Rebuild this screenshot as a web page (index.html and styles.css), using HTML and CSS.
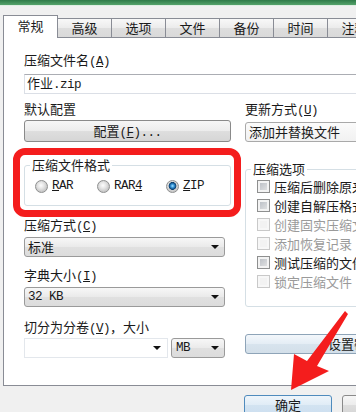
FILE: index.html
```html
<!DOCTYPE html>
<html lang="zh-CN">
<head>
<meta charset="utf-8">
<title>压缩文件名和参数</title>
<link rel="stylesheet" href="styles.css">
</head>
<body>
<div class="titlebar"></div>
<div class="tabs">
  <div class="tab active">常规</div>
  <div class="tab">高级</div>
  <div class="tab">选项</div>
  <div class="tab">文件</div>
  <div class="tab">备份</div>
  <div class="tab">时间</div>
  <div class="tab">注释</div>
</div>
<div class="panel">
  <div class="label">压缩文件名<span class="en">(<u>A</u>)</span></div>
  <div class="input filename">作业<span class="en">.zip</span></div>
  <div class="columns">
    <div class="col left">
      <div class="label">默认配置</div>
      <div class="button profile">配置<span class="en">(<u>F</u>)...</span></div>
      <div class="highlight">
        <fieldset class="group format">
          <legend>压缩文件格式</legend>
          <div class="radios">
            <div class="radio-item"><span class="radio"></span><span class="en"><u>R</u>AR</span></div>
            <div class="radio-item"><span class="radio"></span><span class="en">RAR<u>4</u></span></div>
            <div class="radio-item"><span class="radio checked"></span><span class="en"><u>Z</u>IP</span></div>
          </div>
        </fieldset>
      </div>
      <div class="label gap-a">压缩方式<span class="en">(<u>C</u>)</span></div>
      <div class="combo small"><span class="combo-text">标准</span><span class="arrow"></span></div>
      <div class="label gap-b">字典大小<span class="en">(<u>I</u>)</span></div>
      <div class="combo small"><span class="combo-text en">32 KB</span><span class="arrow"></span></div>
      <div class="label gap-c">切分为分卷<span class="en">(<u>V</u>)</span>，大小</div>
      <div class="split-row">
        <div class="combo edit"><span class="combo-text"></span><span class="arrow"></span></div>
        <div class="combo unit"><span class="combo-text en">MB</span><span class="arrow"></span></div>
      </div>
    </div>
    <div class="col right">
      <div class="label">更新方式<span class="en">(<u>U</u>)</span></div>
      <div class="combo update"><span class="combo-text">添加并替换文件</span><span class="arrow"></span></div>
      <fieldset class="group options">
        <legend>压缩选项</legend>
        <div class="checks">
          <div class="check-item"><span class="check"></span>压缩后删除原来的文件</div>
          <div class="check-item"><span class="check"></span>创建自解压格式压缩文件</div>
          <div class="check-item disabled"><span class="check"></span>创建固实压缩文件</div>
          <div class="check-item disabled"><span class="check"></span>添加恢复记录</div>
          <div class="check-item"><span class="check"></span>测试压缩的文件</div>
          <div class="check-item disabled"><span class="check"></span>锁定压缩文件</div>
        </div>
      </fieldset>
      <div class="button blue password">设置密码<span class="en">(<u>P</u>)...</span></div>
    </div>
  </div>
</div>
<div class="actions">
  <div class="button default">确定</div>
  <div class="button">取消</div>
</div>
<svg class="pointer" width="356" height="412" viewBox="0 0 356 412" aria-hidden="true">
  <polygon points="291,390 294,354 307,361 345,311 348,314 317,366 329,371" fill="#f41d1d"/>
</svg>
</body>
</html>
```

FILE: styles.css
```css
html, body {
  margin: 0;
  padding: 0;
}
body {
  position: relative;
  width: 356px;
  height: 412px;
  overflow: hidden;
  background: #f0f0f0;
  font-family: "Noto Sans CJK SC", sans-serif;
  font-size: 13px;
  line-height: 16px;
  color: #1a1a1a;
}
.en {
  font-family: "Liberation Mono", "Noto Sans CJK SC", monospace;
  font-size: 12.6px;
  letter-spacing: -0.55px;
}
u {
  text-decoration: underline;
  text-underline-offset: 1px;
}
.titlebar {
  height: 5px;
  background: linear-gradient(#2f7a48, #55a36b);
  border-bottom: 1px solid #dfeee3;
}
.tabs {
  display: flex;
  align-items: flex-end;
  height: 22px;
  margin-top: 9px;
  margin-left: 3px;
}
.tab {
  box-sizing: border-box;
  width: 55px;
  height: 19px;
  margin-left: -1px;
  padding-top: 1px;
  text-align: center;
  border: 1px solid #898c95;
  border-bottom: none;
  background: linear-gradient(#f8f8f8, #ebebeb 50%, #dedede 51%, #d9d9d9);
  flex-shrink: 0;
}
.tab:first-child {
  margin-left: 0;
}
.tab.active {
  position: relative;
  z-index: 1;
  height: 23px;
  margin-bottom: -1px;
  padding-top: 2px;
  background: #fff;
}
.panel {
  box-sizing: border-box;
  width: 520px;
  margin-left: 3px;
  padding: 14px 0 27px 20px;
  background: #fff;
  border: 1px solid #898c95;
}
.input {
  box-sizing: border-box;
  height: 20px;
  padding-left: 2px;
  background: #fff;
  border: 1px solid #dbdfe6;
  border-top-color: #abadb3;
}
.filename {
  width: 426px;
  margin-top: 4px;
}
.columns {
  display: flex;
  gap: 14px;
  margin-top: 7px;
}
.col.left {
  width: 207px;
}
.col.right {
  width: 230px;
}
.button {
  box-sizing: border-box;
  height: 20px;
  text-align: center;
  border: 1px solid #8a8a8a;
  border-radius: 3px;
  background: linear-gradient(#f6f6f6, #ececec 50%, #dedede 51%, #d6d6d6);
}
.button.profile {
  height: 22px;
  line-height: 20px;
  margin-top: 3px;
}
.combo {
  box-sizing: border-box;
  display: flex;
  align-items: center;
  height: 20px;
  padding: 0 5px 0 3px;
  border: 1px solid #9a9a9a;
  border-radius: 3px;
  background: linear-gradient(#f7f7f7, #eaeaea 50%, #e0e0e0 51%, #dcdcdc);
}
.combo-text {
  flex: 1;
  white-space: nowrap;
}
.arrow {
  width: 0;
  height: 0;
  border-left: 4px solid transparent;
  border-right: 4px solid transparent;
  border-top: 4px solid #111;
}
.combo.update {
  width: 230px;
  margin-top: 3px;
  background: linear-gradient(#fbfbfb, #f1f1f1);
  border-color: #a9a9a9;
}
.combo.small {
  width: 201px;
  margin-top: 2px;
}
.split-row {
  display: flex;
  gap: 3px;
  margin-top: 1px;
}
.combo.edit {
  width: 144px;
  border-radius: 0;
  background: #fff;
  border-color: #e3e7ec;
  padding-right: 6px;
}
.combo.unit {
  width: 54px;
  padding-left: 4px;
}
.gap-a { margin-top: 11px; }
.gap-b { margin-top: 10px; }
.gap-c { margin-top: 12px; }
.highlight {
  position: relative;
  margin-top: 15px;
}
.highlight::after {
  content: "";
  position: absolute;
  top: -9px;
  left: -11px;
  right: -10px;
  bottom: -11px;
  border: 7px solid #f41d1d;
  border-radius: 12px;
  pointer-events: none;
}
.group {
  margin: 0;
  padding: 0;
  min-width: 0;
  border: 1px solid #d5dfe5;
  border-radius: 3px;
}
.group legend {
  margin-left: 5px;
  padding: 0 2px;
  line-height: 16px;
}
.radios {
  display: flex;
  align-items: center;
  gap: 24px;
  height: 16px;
  padding: 5px 0 11px 10px;
}
.radio-item {
  display: flex;
  align-items: center;
  gap: 4px;
  white-space: nowrap;
}
.radio {
  box-sizing: border-box;
  width: 13px;
  height: 13px;
  border: 1px solid #8e8f8f;
  border-radius: 50%;
  background: radial-gradient(circle at 45% 40%, #fdfdfd 0, #e6e6e6 3px, #c9c9c9 6px);
}
.radio.checked {
  background:
    radial-gradient(circle at 50% 45%, #a9e4ff 0, #3f9ee0 1.5px, #14568e 3px, #0e3f6c 3.6px, rgba(0,0,0,0) 4.2px),
    radial-gradient(circle at 45% 40%, #fdfdfd 0, #e6e6e6 3px, #c9c9c9 6px);
}
.group.options {
  width: 230px;
  margin-top: 19px;
}
.checks {
  padding: 0 0 15px 11px;
}
.check-item {
  display: flex;
  align-items: center;
  gap: 4px;
  height: 19px;
  white-space: nowrap;
}
.check {
  box-sizing: border-box;
  flex-shrink: 0;
  width: 13px;
  height: 13px;
  border: 1px solid #8e8f8f;
  background: linear-gradient(135deg, #b4b9c0, #e8e8e8);
  box-shadow: inset 0 0 0 2px #f3f3f3;
}
.check-item.disabled {
  color: #9a9a9a;
}
.check-item.disabled .check {
  border-color: #c9c9c9;
  background: #f2f2f2;
  box-shadow: inset 0 0 0 2px #f7f7f7;
}
.button.blue {
  border-color: #8ea4b8;
  background: linear-gradient(#f3f7fb, #e4edf5 50%, #d8e4ee 51%, #d3dfe9);
}
.button.password {
  width: 260px;
  margin-top: 27px;
  line-height: 18px;
  white-space: nowrap;
}
.actions {
  display: flex;
  gap: 10px;
  margin: 9px 0 0 244px;
}
.actions .button {
  flex-shrink: 0;
  width: 88px;
  line-height: 18px;
}
.button.default {
  border-color: #4f8bbd;
  background: linear-gradient(#eef5fb, #e0ecf6 50%, #d2e3f1 51%, #cddff0);
}
.pointer {
  position: absolute;
  left: 0;
  top: 0;
  pointer-events: none;
}
```
